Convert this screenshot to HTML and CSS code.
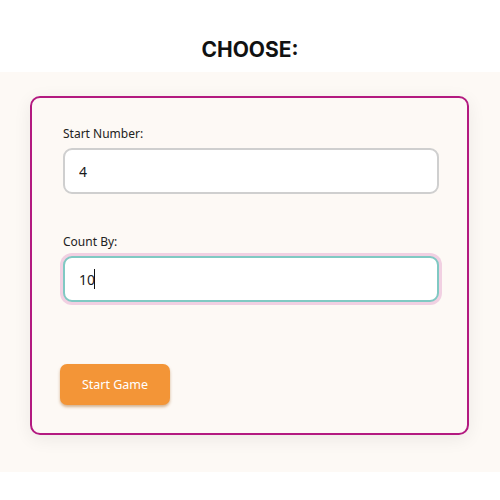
FILE: index.html
```html
<!DOCTYPE html>
<html>
<head>
<meta charset="utf-8">
<link rel="stylesheet" href="styles.css">
</head>
<body>
<header class="top">
  <h1 class="title">CHOOSE:</h1>
</header>
<section class="band">
  <form class="card">
    <label class="field">
      <span class="label">Start Number:</span>
      <input class="input" type="text" value="4">
    </label>
    <label class="field field-second">
      <span class="label">Count By:</span>
      <span class="input-wrap">
        <input class="input input-focus" type="text" value="10">
        <span class="caret"></span>
      </span>
    </label>
    <button class="btn" type="button">Start Game</button>
  </form>
</section>
</body>
</html>
```
FILE: styles.css
```css
* { box-sizing: border-box; }
html, body { margin: 0; padding: 0; background: #ffffff; }
body { font-family: "Noto Sans", "Open Sans", sans-serif; }
.top {
  height: 72px;
  padding-top: 35px;
  text-align: center;
}
.title {
  margin: 0;
  font-family: Inter, "Liberation Sans", sans-serif;
  font-weight: 700;
  font-size: 21px;
  line-height: 30px;
  color: #111;
}
.band {
  background: #fdf9f5;
  padding: 24px 31px 37px 30px;
}
.card {
  border: 2px solid #b31a80;
  border-radius: 10px;
  padding: 28px 28px 28px 31px;
  box-shadow: 0 4px 18px rgba(0, 0, 0, 0.07);
  display: flex;
  flex-direction: column;
  align-items: flex-start;
}
.field {
  display: flex;
  flex-direction: column;
  gap: 6px;
  width: 100%;
}
.field-second { margin-top: 40px; }
.label {
  font-size: 12px;
  line-height: 16px;
  color: #222;
}
.input-wrap {
  position: relative;
  display: block;
  width: 100%;
}
.input {
  display: block;
  width: 100%;
  height: 46px;
  border: 2px solid #cfcfcf;
  border-radius: 9px;
  background: #fff;
  padding: 0 14px;
  font-family: "Noto Sans", sans-serif;
  font-size: 14px;
  color: #1a1a1a;
  outline: none;
}
.input-focus {
  border-color: #80c9c3;
  box-shadow: 0 0 0 3px #f1d0e2;
}
.caret {
  position: absolute;
  left: 31px;
  top: 13px;
  width: 1px;
  height: 20px;
  background: #111;
}
.btn {
  margin-top: 62px;
  margin-left: -3px;
  width: 110px;
  height: 41px;
  border: none;
  border-radius: 7px;
  background: #f39537;
  color: #fff;
  font-family: "Noto Sans", sans-serif;
  font-size: 12.5px;
  box-shadow: 0 2px 3px rgba(160, 90, 20, 0.45);
  cursor: pointer;
}
```
